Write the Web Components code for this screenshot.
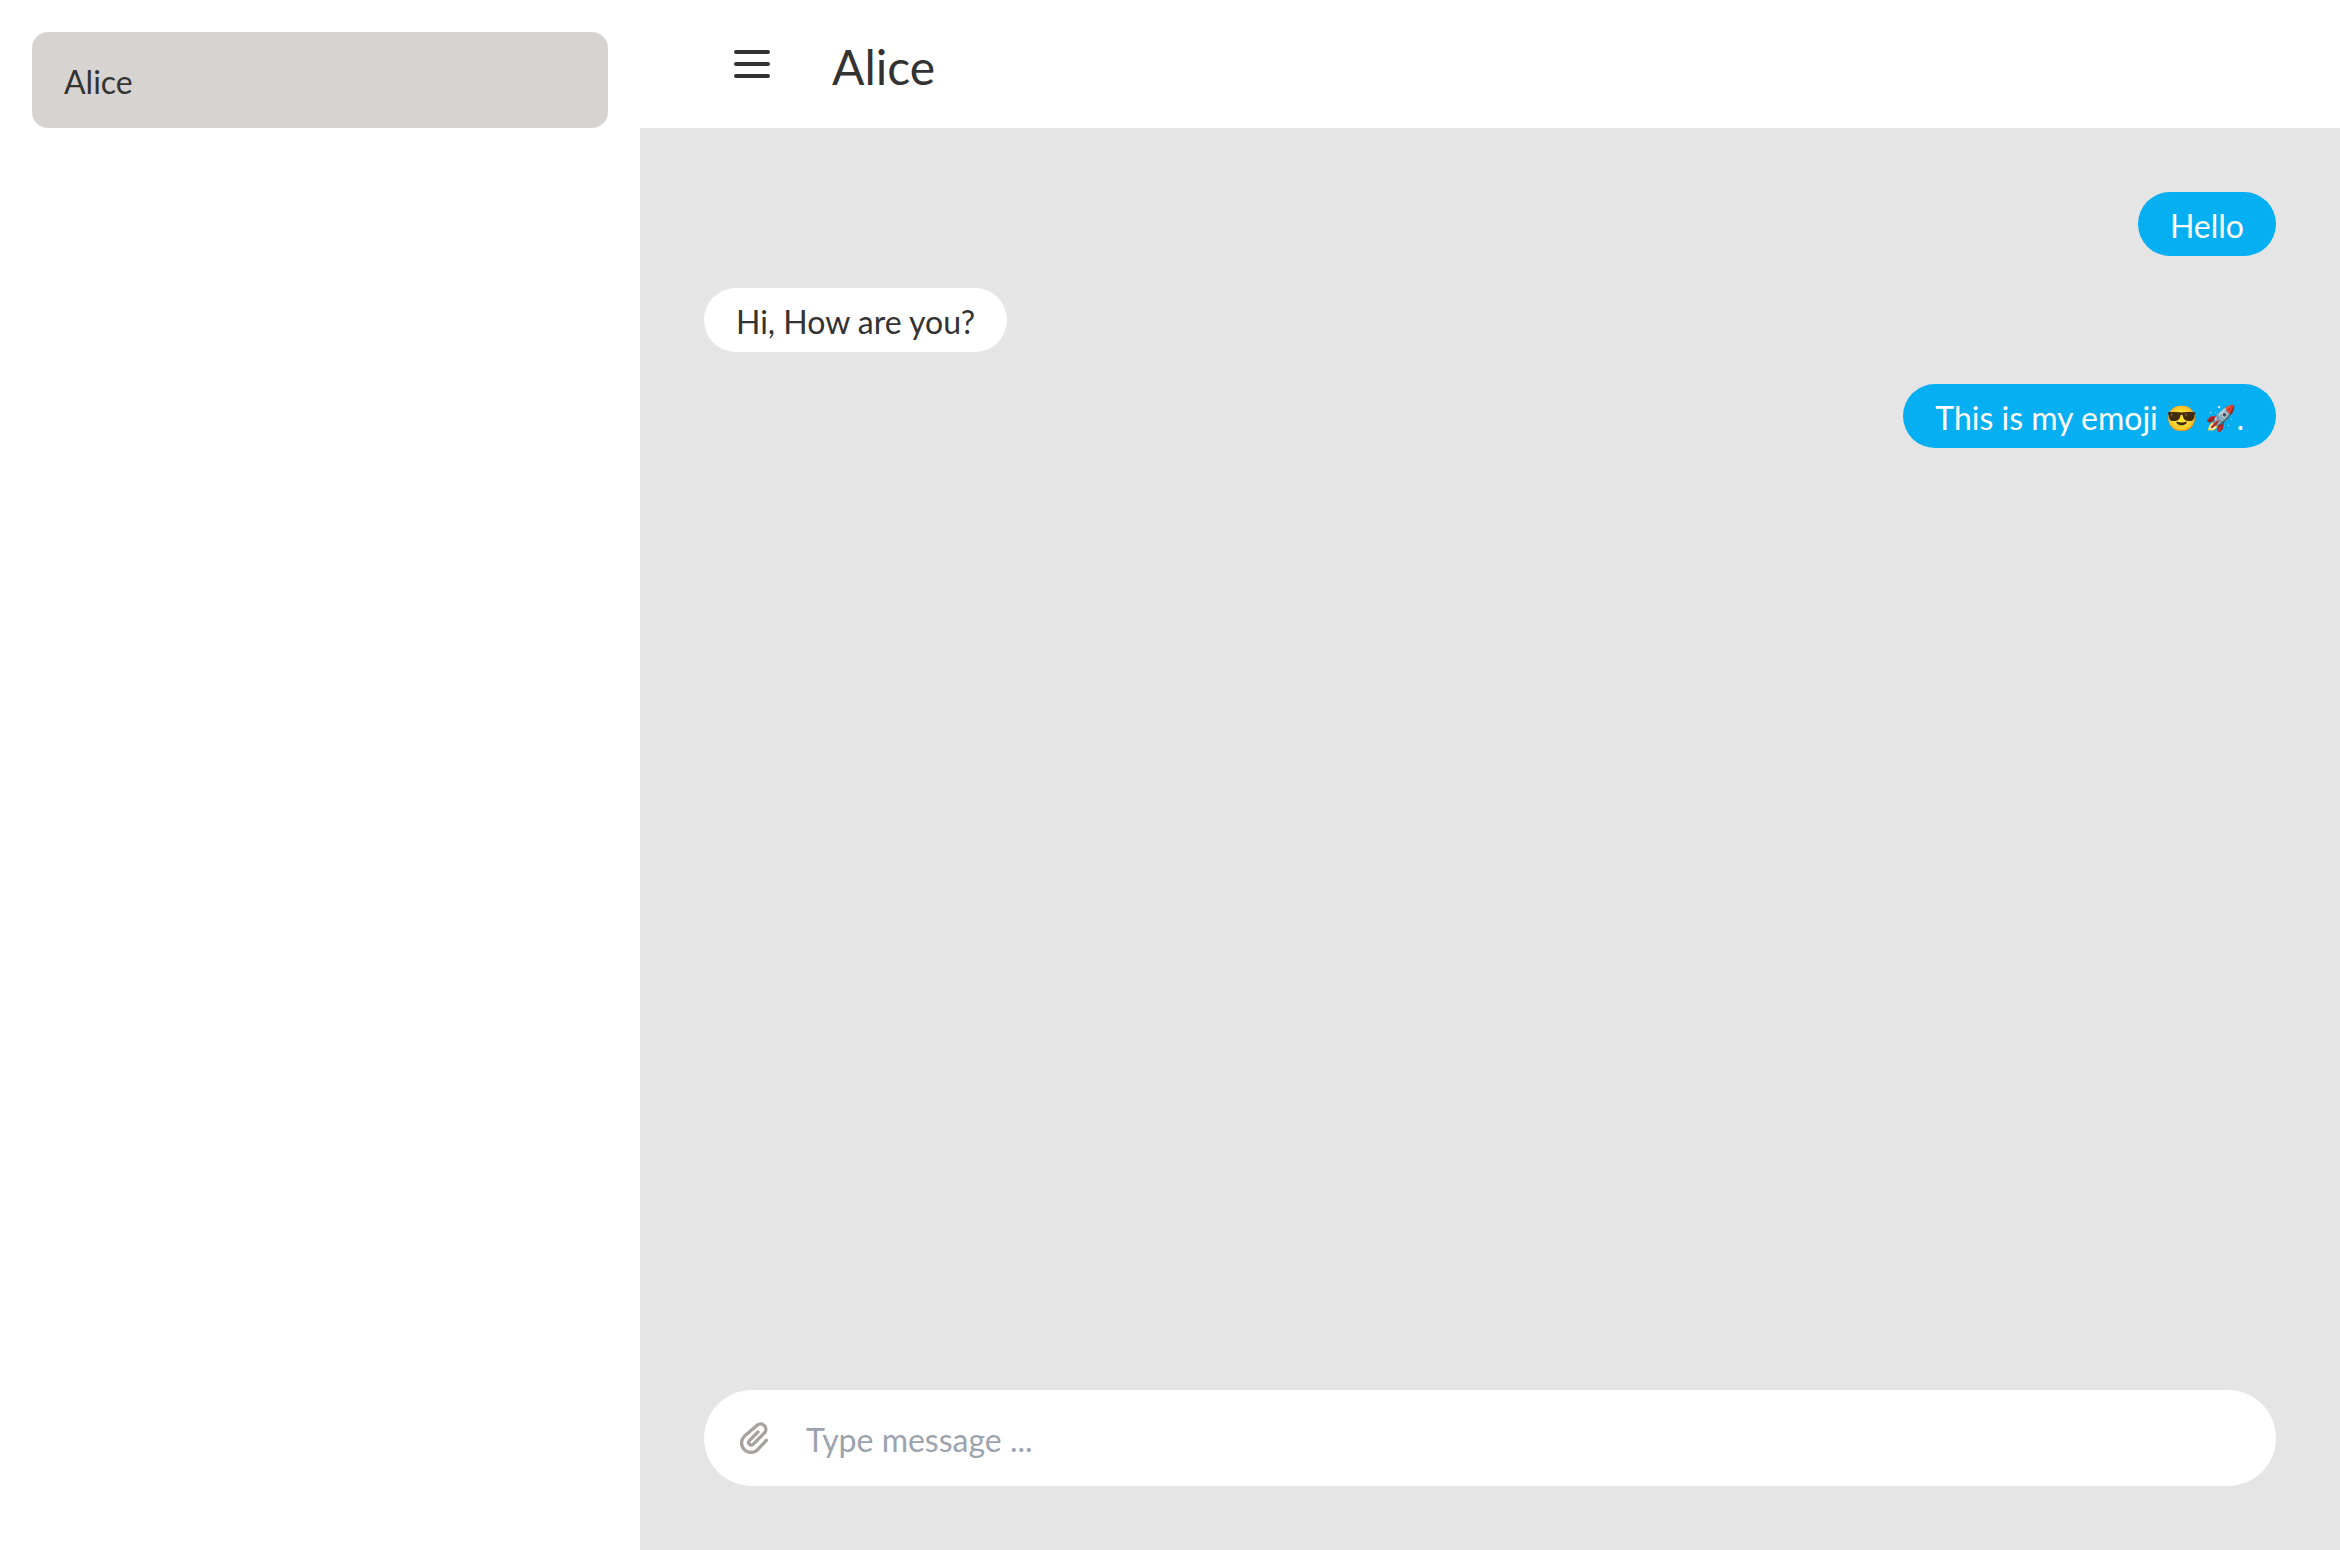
<!DOCTYPE html>
<html lang="en">
<head>
<meta charset="utf-8">
<title>Chat</title>
<style>
  html, body { height: 100%; margin: 0; }
  body {
    font-family: Lato, "Noto Color Emoji", sans-serif;
    font-size: 32px;
    line-height: 48px;
    color: #333;
    background: #fff;
  }
</style>
</head>
<body>
<chat-app>
  <chat-contact slot="contacts">Alice</chat-contact>
  <chat-header slot="header">Alice</chat-header>
  <chat-message slot="messages" own>Hello</chat-message>
  <chat-message slot="messages">Hi, How are you?</chat-message>
  <chat-message slot="messages" own>This is my emoji <span>😎</span> <span>🚀</span>.</chat-message>
  <chat-composer slot="composer"></chat-composer>
</chat-app>
<script>
  function define(name, markup) {
    const template = document.createElement('template');
    template.innerHTML = markup;
    customElements.define(name, class extends HTMLElement {
      constructor() {
        super();
        this.attachShadow({ mode: 'open' }).append(template.content.cloneNode(true));
      }
    });
  }

  define('chat-app', `
    <style>
      :host { display: flex; height: 100%; min-height: 100vh; }
      nav { flex: 0 0 640px; box-sizing: border-box; padding: 32px; background: #fff; }
      main { flex: 1; min-width: 0; display: flex; flex-direction: column; background: #e5e5e5; }
      .messages { flex: 1; min-height: 0; overflow: auto; box-sizing: border-box; padding: 64px;
        display: flex; flex-direction: column; align-items: flex-start; gap: 32px; }
      footer { padding: 0 64px 64px; }
    </style>
    <nav aria-label="Contacts"><slot name="contacts"></slot></nav>
    <main>
      <slot name="header"></slot>
      <div class="messages"><slot name="messages"></slot></div>
      <footer><slot name="composer"></slot></footer>
    </main>`);

  define('chat-contact', `
    <style>
      :host { display: block; }
      button { display: block; width: 100%; padding: 26px 32px 22px; border: 0; border-radius: 16px;
        background: #d6d3d0; color: inherit; font: inherit; text-align: left; cursor: pointer; }
    </style>
    <button type="button"><slot></slot></button>`);

  define('chat-header', `
    <style>
      :host { display: flex; align-items: center; gap: 32px; height: 128px; box-sizing: border-box;
        padding: 0 64px; background: #fff; }
      button { padding: 24px; border: 0; background: none; color: inherit; cursor: pointer; }
      svg { display: block; width: 48px; height: 48px; }
      h1 { margin: 0; padding-top: 6px; font-size: 48px; line-height: 64px; font-weight: 400; }
    </style>
    <button type="button" aria-label="Menu">
      <svg viewBox="0 0 24 24" fill="none" stroke="currentColor" stroke-width="2" stroke-linecap="round"><path d="M4 6h16M4 12h16M4 18h16"/></svg>
    </button>
    <h1><slot></slot></h1>`);

  define('chat-message', `
    <style>
      :host { display: block; padding: 10px 32px 6px; border-radius: 32px; background: #fff; }
      :host([own]) { align-self: flex-end; background: #06aff2; color: #fff; }
      p { margin: 0; }
      ::slotted(span) { font-size: 25px; line-height: 1; vertical-align: 3px; }
    </style>
    <p><slot></slot></p>`);

  define('chat-composer', `
    <style>
      :host { display: block; }
      form { display: flex; align-items: center; gap: 32px; padding: 24px 32px; border-radius: 48px; background: #fff; }
      button { padding: 0; border: 0; background: none; color: #a8a29e; cursor: pointer; }
      svg { display: block; width: 38px; height: 38px; }
      input { flex: 1; min-width: 0; box-sizing: border-box; height: 48px; padding: 4px 0 0; border: 0; outline: 0; background: none; color: inherit; font: inherit; }
      input::placeholder { color: #9ca3af; opacity: 1; }
    </style>
    <form>
      <button type="button" aria-label="Attach file">
        <svg viewBox="138 147 114 114" fill="none" stroke="currentColor" stroke-width="10" stroke-linecap="round" stroke-linejoin="round"><path d="M204 186L178 212A7.8 7.8 0 0 0 189 223L224 188A16 16 0 0 0 201.500 165.500L163 199A28 28 0 0 0 203 239L229 211"/></svg>
      </button>
      <input type="text" aria-label="Message" placeholder="Type message ...">
    </form>`);
</script>
</body>
</html>
